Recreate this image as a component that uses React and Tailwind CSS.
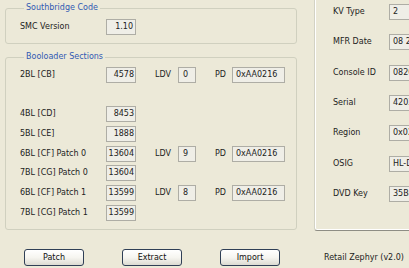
import React from 'react';

const sections = [
  { name: '2BL [CB]', size: '4578', ldv: '0', pd: '0xAA0216' },
  null,
  { name: '4BL [CD]', size: '8453' },
  { name: '5BL [CE]', size: '1888' },
  { name: '6BL [CF] Patch 0', size: '13604', ldv: '9', pd: '0xAA0216' },
  { name: '7BL [CG] Patch 0', size: '13604' },
  { name: '6BL [CF] Patch 1', size: '13599', ldv: '8', pd: '0xAA0216' },
  { name: '7BL [CG] Patch 1', size: '13599' },
];

const keyvault = [
  ['KV Type', '2'],
  ['MFR Date', '08 27 07'],
  ['Console ID', '082016548812'],
  ['Serial', '420357617205'],
  ['Region', '0x02FE'],
  ['OSIG', 'HL-DT-ST DVD'],
  ['DVD Key', '35B6C1A0E47F'],
];

function Field({ value, className = '' }) {
  return (
    <div className={`h-[16px] border border-[#aeada5] bg-[#efeee7] leading-[14px] whitespace-nowrap overflow-hidden ${className}`}>
      {value}
    </div>
  );
}

function XpButton({ children }) {
  return (
    <button className="w-[60px] h-[17px] rounded-[3px] border border-[#2f3f56] bg-gradient-to-b from-white via-[#f6f5f0] to-[#dcdbd2] leading-[15px] text-[#111]">
      {children}
    </button>
  );
}

export default function App() {
  return (
    <div
      className="w-[409px] h-[268px] overflow-hidden bg-[#ECE9D8] flex text-[8px] text-[#222]"
      style={{ fontFamily: '"DejaVu Sans", Verdana, sans-serif' }}
    >
      {/* Left column */}
      <div className="w-[314px] shrink-0 flex flex-col pl-[5px]">
        <fieldset className="mt-[2px] w-[292px] border border-[#d0d0bf] rounded-[3px] pl-[14px] pt-[5px] pb-[8px]">
          <legend className="ml-[4px] px-[2px] leading-[12px] text-[#3159b3]">Southbridge Code</legend>
          <div className="flex items-center h-[16px]">
            <span className="w-[86px]">SMC Version</span>
            <Field value="1.10" className="w-[30px] text-right pr-[2px]" />
          </div>
        </fieldset>

        <fieldset className="mt-[7px] w-[292px] border border-[#d0d0bf] rounded-[3px] pl-[14px] pt-[4px] pb-[8px]">
          <legend className="ml-[4px] px-[2px] leading-[12px] text-[#3159b3]">Booloader Sections</legend>
          <div className="flex flex-col gap-[3.7px]">
            {sections.map((s, i) => (
              <div key={i} className="flex items-center h-[16px]">
                {s && (
                  <>
                    <span className="w-[86px] whitespace-nowrap">{s.name}</span>
                    <Field value={s.size} className="w-[30px] text-right pr-[1px]" />
                    {s.ldv && (
                      <>
                        <span className="ml-[19px] w-[23px]">LDV</span>
                        <Field value={s.ldv} className="w-[18px] pl-[4px]" />
                        <span className="ml-[19px] w-[17px]">PD</span>
                        <Field value={s.pd} className="w-[53px] pl-[3px]" />
                      </>
                    )}
                  </>
                )}
              </div>
            ))}
          </div>
        </fieldset>

        <div className="mt-[19px] ml-[19px] flex gap-[38px]">
          <XpButton>Patch</XpButton>
          <XpButton>Extract</XpButton>
          <XpButton>Import</XpButton>
        </div>
      </div>

      {/* Right column */}
      <div className="flex-1 flex flex-col">
        <div className="h-[231px] w-[120px] border-l border-b border-l-[#d3d2c4] border-b-[#8e8d84] rounded-bl-[3px] shadow-[inset_1px_0_0_#ffffff,inset_0_-1px_0_#ffffff] pl-[18px] pt-[4px] flex flex-col gap-[14.33px]">
          {keyvault.map(([label, value]) => (
            <div key={label} className="flex items-center h-[16px]">
              <span className="w-[56px] shrink-0 whitespace-nowrap">{label}</span>
              <Field value={value} className="w-[70px] shrink-0 pl-[3px]" />
            </div>
          ))}
        </div>
        <div className="mt-[21px] ml-[10px] leading-[12px] whitespace-nowrap">Retail Zephyr (v2.0)</div>
      </div>
    </div>
  );
}
